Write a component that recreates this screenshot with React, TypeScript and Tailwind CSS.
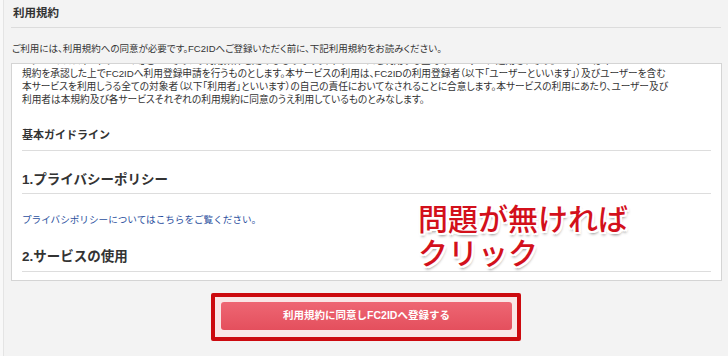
const jp = "font-['Liberation_Sans','Noto_Sans_CJK_JP',sans-serif]";

const termLines = [
  "トサービス（以下「本サービス」といいます）の利用条件を定めるものであり、本サービスを利用する全てのユーザーに適用されます。ユーザーは本",
  "規約を承認した上でFC2IDへ利用登録申請を行うものとします。本サービスの利用は、FC2IDの利用登録者（以下「ユーザーといいます」）及びユーザーを含む",
  "本サービスを利用しうる全ての対象者（以下「利用者」といいます）の自己の責任においてなされることに合意します。本サービスの利用にあたり、ユーザー及び",
  "利用者は本規約及び各サービスそれぞれの利用規約に同意のうえ利用しているものとみなします。",
];

export default function App() {
  return (
    <div className={`${jp} relative h-[356px] w-[728px] overflow-hidden bg-[#f8f8f8] text-[#333]`}>
      <div className="ml-[3px] h-full border-l border-[#e4e4e4] bg-[#f3f3f3]">
        {/* header */}
        <div className="mx-[7px] flex h-[28px] items-center border-b border-[#dcdcdc] pl-[2px] text-[11.5px] font-bold">
          利用規約
        </div>
        <div className="h-[35px] pl-[8px] pt-[14px] text-[9.5px] leading-[13px] [font-feature-settings:'palt']">
          ご利用には、利用規約への同意が必要です。FC2IDへご登録いただく前に、下記利用規約をお読みください。
        </div>

        {/* terms box */}
        <div className="ml-[7px] mr-[6px] h-[218px] overflow-hidden border border-[#d4d4d4] bg-white px-[10px]">
          <div className="-mt-[10px] text-[9.7px] leading-[13px] [font-feature-settings:'palt']">
            {termLines.map((l) => (
              <p key={l} className="whitespace-nowrap">
                {l}
              </p>
            ))}
          </div>
          <div className="flex h-[45px] items-center border-b border-[#dddddd] pt-[14px] text-[11px] font-bold">
            基本ガイドライン
          </div>
          <div className="flex h-[43px] items-center border-b border-[#dddddd] pt-[16px] text-[13.5px] font-bold">
            1.プライバシーポリシー
          </div>
          <div className="flex h-[42px] items-center pt-[10px] text-[9.6px] text-[#2b4f9e]">
            プライバシポリシーについてはこちらをご覧ください。
          </div>
          <div className="flex h-[36px] items-center border-b border-[#dddddd] pt-[7px] text-[13.5px] font-bold">
            2.サービスの使用
          </div>
        </div>

        {/* agree button */}
        <div className="mx-auto mt-[12px] h-[48px] w-[310px] rounded-[2px] border-4 border-[#cc0a0f] bg-[#f9e6e6] p-[5px] pl-[6px]">
          <button className="flex h-[28px] w-full items-center justify-center rounded-[3px] bg-gradient-to-b from-[#ee6673] to-[#e44f5d] text-[10.5px] font-bold text-white">
            利用規約に同意しFC2IDへ登録する
          </button>
        </div>
      </div>

      {/* annotation */}
      <div className="absolute left-[418px] top-[200px] font-['Noto_Sans_CJK_JP',sans-serif] text-[30px] font-medium leading-[34px] text-[#d3101b] [text-shadow:-2px_-2px_0_#fff,2px_-2px_0_#fff,-2px_2px_0_#fff,2px_2px_0_#fff,0_2px_0_#fff,0_-2px_0_#fff,2px_0_0_#fff,-2px_0_0_#fff,1px_3px_3px_rgba(0,0,0,0.45)]">
        <div>問題が無ければ</div>
        <div>クリック</div>
      </div>
    </div>
  );
}
